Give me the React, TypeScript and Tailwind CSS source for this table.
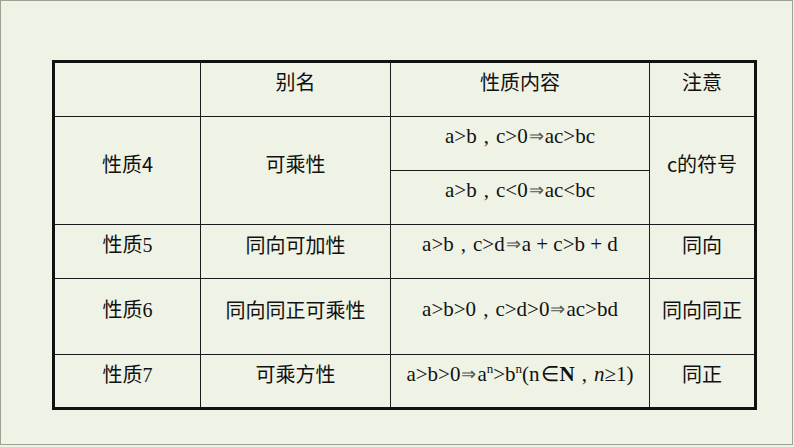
import React from "react";

const cjk = "font-['Noto_Sans_CJK_SC','Noto_Sans',sans-serif]";
const serif = "font-['Liberation_Serif','Times_New_Roman',serif]";

function Cell({
  children,
  className = "",
  rowSpan,
}: {
  children?: React.ReactNode;
  className?: string;
  rowSpan?: number;
}) {
  return (
    <td
      rowSpan={rowSpan}
      className={`border border-[#1a1a1a] p-0 pb-[14px] text-center align-middle ${className}`}
    >
      {children}
    </td>
  );
}

const Imp = () => <span className="text-[18px] text-[#555] mx-[1px] relative top-[-1px]">⇒</span>;
const Comma = () => <span className="mx-[7px]">,</span>;
const Sup = ({ children }: { children: React.ReactNode }) => (
  <span className="text-[13px] relative top-[-8px]">{children}</span>
);

export default function App() {
  return (
    <div className="w-[794px] h-[447px] bg-[#eef3e6] overflow-hidden">
      <div className="w-[793px] h-[445px] border border-[#9aa391] pt-[59px] pl-[51px]">
        <table
          className={`border-collapse border-[3px] border-[#111] text-[#111] text-[20px] leading-none ${cjk}`}
          style={{ tableLayout: "fixed" }}
        >
          <colgroup>
            <col className="w-[147px]" />
            <col className="w-[190px]" />
            <col className="w-[259px]" />
            <col className="w-[106px]" />
          </colgroup>
          <tbody>
            <tr className="h-[55px]">
              <Cell />
              <Cell className="pb-[16px]">别名</Cell>
              <Cell className="pb-[16px]">性质内容</Cell>
              <Cell className="pb-[16px]">注意</Cell>
            </tr>
            <tr className="h-[54px]">
              <Cell rowSpan={2}>性质4</Cell>
              <Cell rowSpan={2}>可乘性</Cell>
              <Cell className={`${serif} text-[21px]`}>
                a&gt;b<Comma />c&gt;0<Imp />ac&gt;bc
              </Cell>
              <Cell rowSpan={2}>c的符号</Cell>
            </tr>
            <tr className="h-[54px]">
              <Cell className={`${serif} text-[21px]`}>
                a&gt;b<Comma />c&lt;0<Imp />ac&lt;bc
              </Cell>
            </tr>
            <tr className="h-[54px]">
              <Cell>
                性质<span className={serif}>5</span>
              </Cell>
              <Cell>同向可加性</Cell>
              <Cell className={`${serif} text-[21px]`}>
                a&gt;b<Comma />c&gt;d<Imp />a + c&gt;b + d
              </Cell>
              <Cell>同向</Cell>
            </tr>
            <tr className="h-[76px]">
              <Cell>
                性质<span className={serif}>6</span>
              </Cell>
              <Cell>同向同正可乘性</Cell>
              <Cell className={`${serif} text-[21px]`}>
                a&gt;b&gt;0<Comma />c&gt;d&gt;0<Imp />ac&gt;bd
              </Cell>
              <Cell>同向同正</Cell>
            </tr>
            <tr className="h-[54px]">
              <Cell>
                性质<span className={serif}>7</span>
              </Cell>
              <Cell>可乘方性</Cell>
              <Cell className={`${serif} text-[21px] whitespace-nowrap`}>
                a&gt;b&gt;0<Imp />a<Sup>n</Sup>&gt;b<Sup>n</Sup>(n<span className="mx-[1px]">∈</span>
                <b>N</b>
                <Comma />
                <i>n</i>≥1)
              </Cell>
              <Cell>同正</Cell>
            </tr>
          </tbody>
        </table>
      </div>
    </div>
  );
}
